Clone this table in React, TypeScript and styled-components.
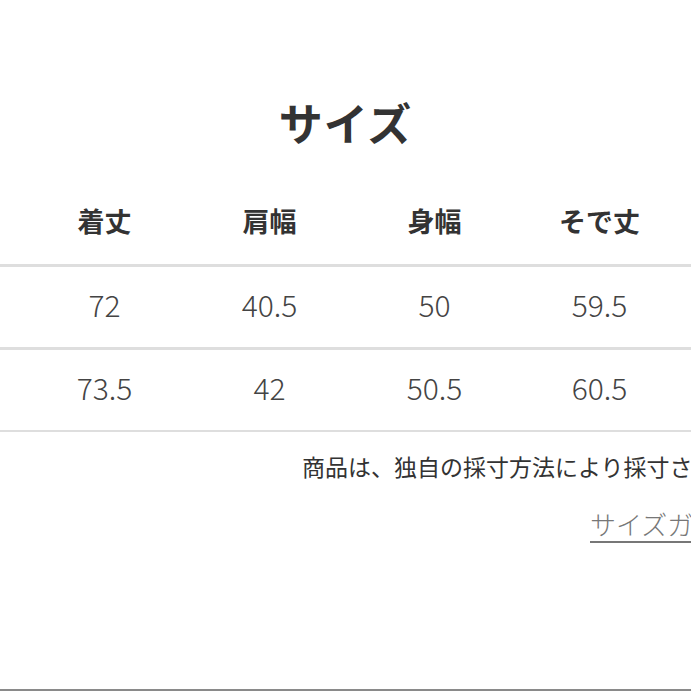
import React from "react";
import styled, { createGlobalStyle } from "styled-components";

const GlobalStyle = createGlobalStyle`
  html, body {
    margin: 0;
    padding: 0;
    background: #ffffff;
  }
  body {
    font-family: "Noto Sans CJK JP", "Noto Sans", sans-serif;
    color: #333;
  }
`;

const Page = styled.div`
  width: 100%;
  min-height: 100vh;
  display: flex;
  flex-direction: column;
  overflow: hidden;
`;

const Title = styled.h2`
  margin: 0;
  padding-top: 92px;
  font-size: 44px;
  line-height: 60px;
  font-weight: 700;
  text-align: center;
  color: #333;
  letter-spacing: 1px;
`;

const Row = styled.div<{ $head?: boolean; $border: number }>`
  display: grid;
  grid-template-columns: repeat(5, 165px);
  padding-left: 22px;
  padding-top: ${(p) => (p.$head ? "51px" : "19px")};
  padding-bottom: 25px;
  border-bottom: ${(p) => p.$border}px solid #dedede;
  white-space: nowrap;
`;

const Cell = styled.div<{ $head?: boolean }>`
  text-align: center;
  line-height: 36px;
  font-size: ${(p) => (p.$head ? "27px" : "30px")};
  font-weight: ${(p) => (p.$head ? 700 : 300)};
  color: ${(p) => (p.$head ? "#333" : "#444")};
`;

const Note = styled.p`
  margin: 18px 0 0;
  padding-left: 302px;
  font-size: 23px;
  line-height: 32px;
  color: #333;
  white-space: nowrap;
`;

const GuideLink = styled.a`
  display: block;
  margin-top: 25px;
  padding-left: 590px;
  font-size: 26px;
  line-height: 34px;
  font-weight: 300;
  color: #777;
  white-space: nowrap;
  text-decoration: underline;
  text-underline-offset: 6px;
  text-decoration-thickness: 2px;
  cursor: pointer;
`;

const Spacer = styled.div`
  flex: 1;
`;

const BottomBar = styled.div`
  height: 2px;
  background: #8a8a8a;
`;

const headers = ["着丈", "肩幅", "身幅", "そで丈"];
const rows = [
  ["72", "40.5", "50", "59.5"],
  ["73.5", "42", "50.5", "60.5"],
];

export default function App() {
  return (
    <Page>
      <GlobalStyle />
      <Title>サイズ</Title>
      <Row $head $border={3}>
        {headers.map((h) => (
          <Cell $head key={h}>
            {h}
          </Cell>
        ))}
      </Row>
      {rows.map((r, i) => (
        <Row key={i} $border={i === rows.length - 1 ? 2 : 3}>
          {r.map((v, j) => (
            <Cell key={j}>{v}</Cell>
          ))}
        </Row>
      ))}
      <Note>商品は、独自の採寸方法により採寸されています。</Note>
      <GuideLink>サイズガイド</GuideLink>
      <Spacer />
      <BottomBar />
    </Page>
  );
}
